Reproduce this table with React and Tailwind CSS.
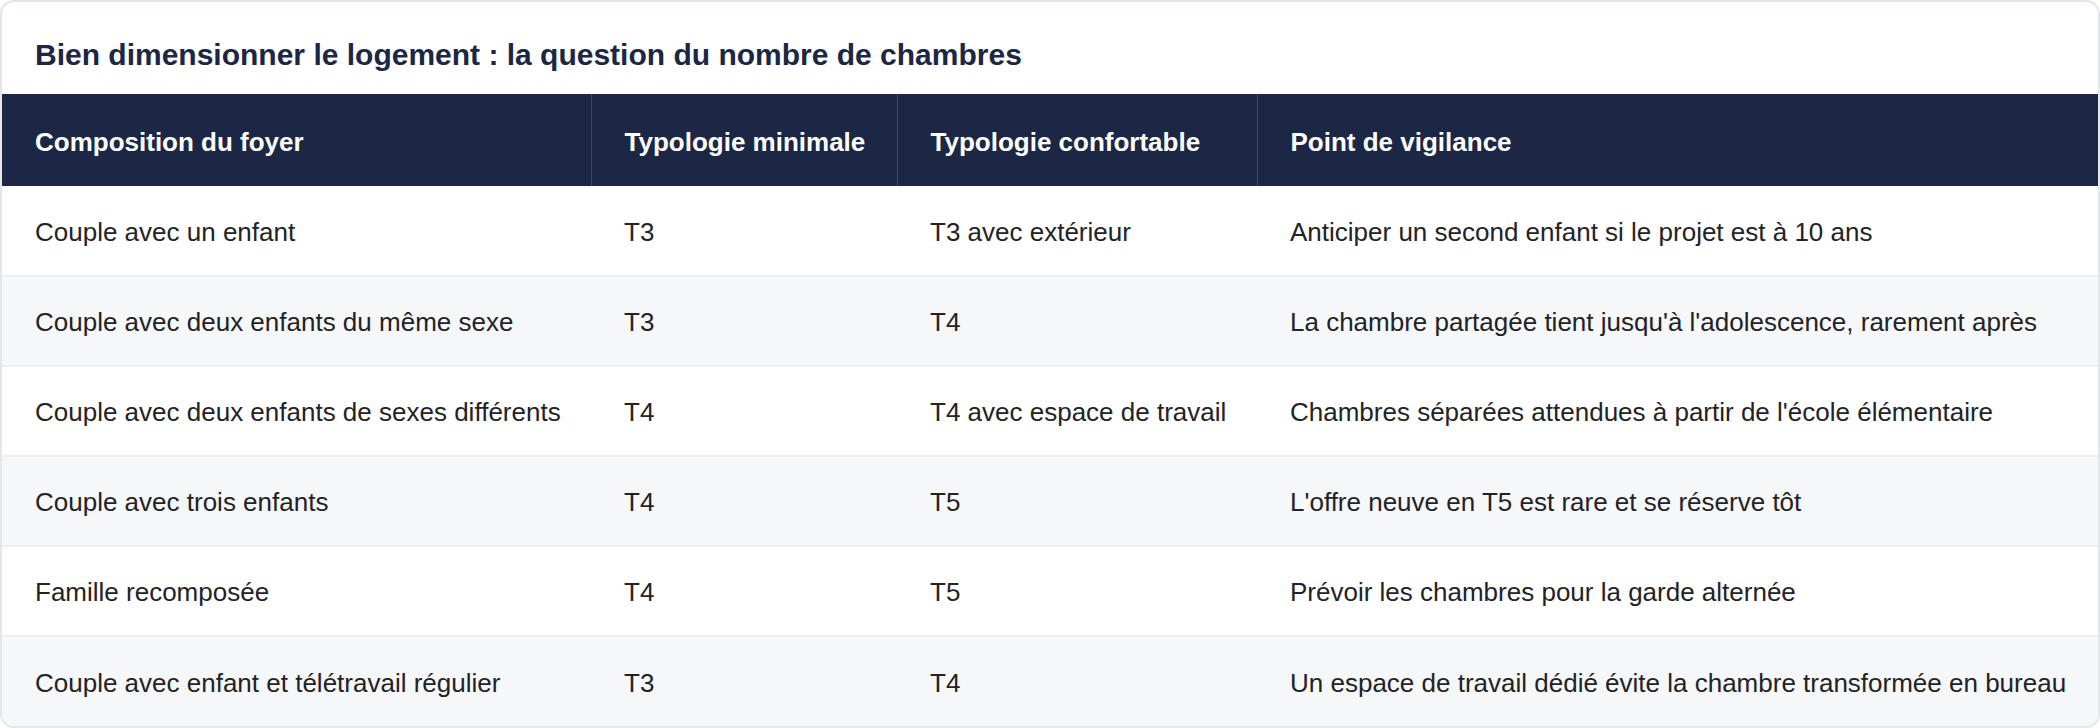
const rows = [
  ["Couple avec un enfant", "T3", "T3 avec extérieur", "Anticiper un second enfant si le projet est à 10 ans"],
  ["Couple avec deux enfants du même sexe", "T3", "T4", "La chambre partagée tient jusqu'à l'adolescence, rarement après"],
  ["Couple avec deux enfants de sexes différents", "T4", "T4 avec espace de travail", "Chambres séparées attendues à partir de l'école élémentaire"],
  ["Couple avec trois enfants", "T4", "T5", "L'offre neuve en T5 est rare et se réserve tôt"],
  ["Famille recomposée", "T4", "T5", "Prévoir les chambres pour la garde alternée"],
  ["Couple avec enfant et télétravail régulier", "T3", "T4", "Un espace de travail dédié évite la chambre transformée en bureau"],
];

const headers = ["Composition du foyer", "Typologie minimale", "Typologie confortable", "Point de vigilance"];

export default function App() {
  return (
    <div className="w-[2100px] h-[728px] bg-white font-['Liberation_Sans',Arial,sans-serif]">
      <div className="border-2 border-[#e3e6eb] rounded-[14px] overflow-hidden bg-white">
        <h2 className="pt-[35px] pb-[21px] px-[33px] text-[30px] leading-[36px] font-bold text-[#1b2745]">
          Bien dimensionner le logement : la question du nombre de chambres
        </h2>

        <table className="w-full table-fixed border-collapse">
          <colgroup>
            <col className="w-[589px]" />
            <col className="w-[306px]" />
            <col className="w-[360px]" />
            <col />
          </colgroup>
          <thead>
            <tr className="bg-[#1b2745]">
              {headers.map((h, i) => (
                <th
                  key={h}
                  className={
                    i < 3
                      ? "h-[92px] pl-[33px] pr-0 pt-[4px] text-left text-[26px] font-bold text-white whitespace-nowrap border-r border-[#3b4763]"
                      : "h-[92px] pl-[33px] pr-0 pt-[4px] text-left text-[26px] font-bold text-white whitespace-nowrap"
                  }
                >
                  {h}
                </th>
              ))}
            </tr>
          </thead>
          <tbody>
            {rows.map((r, i) => (
              <tr
                key={r[0]}
                className={
                  i % 2 === 1
                    ? "bg-[#f6f7f9] border-b-2 border-[#eceef2] last:border-b-0"
                    : "bg-white border-b-2 border-[#eceef2]"
                }
              >
                {r.map((c, j) => (
                  <td key={j} className="h-[90px] pl-[33px] pr-0 pt-[3px] text-[26px] text-[#222326] whitespace-nowrap">
                    {c}
                  </td>
                ))}
              </tr>
            ))}
          </tbody>
        </table>
      </div>
    </div>
  );
}
